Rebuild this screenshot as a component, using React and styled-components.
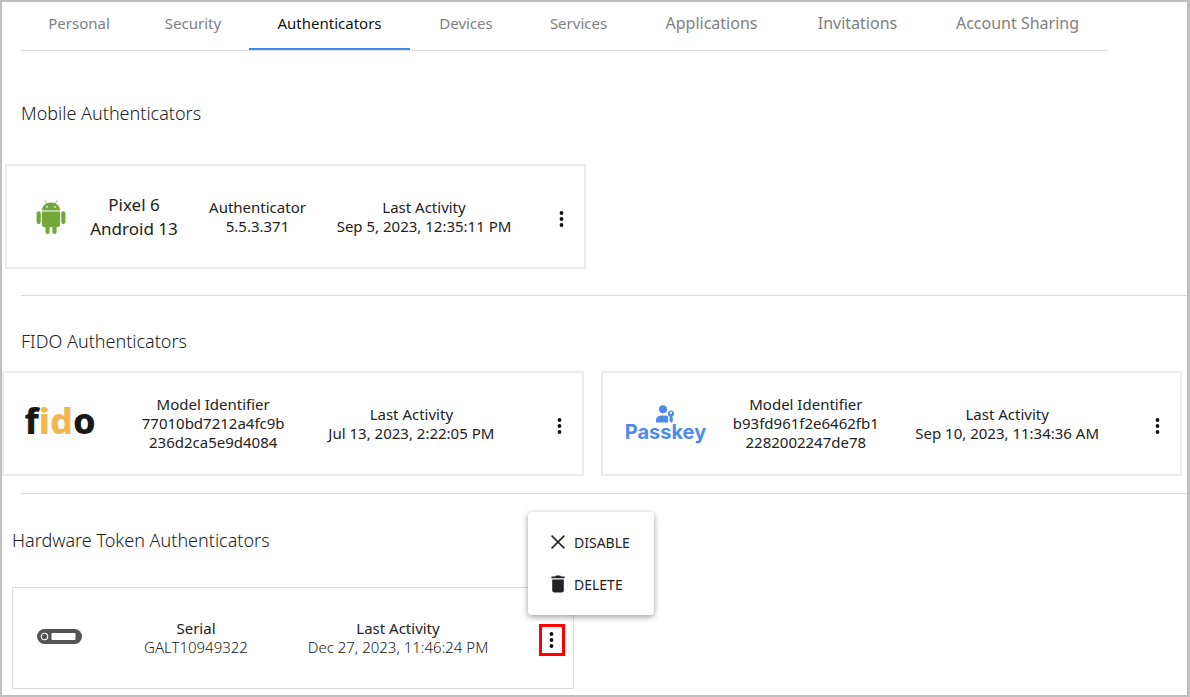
import { useState } from "react";
import styled, { createGlobalStyle } from "styled-components";

const tabs = [
    { name: "Personal", size: 15 },
    { name: "Security", size: 15 },
    { name: "Authenticators", size: 15 },
    { name: "Devices", size: 15 },
    { name: "Services", size: 15 },
    { name: "Applications", size: 16 },
    { name: "Invitations", size: 16 },
    { name: "Account Sharing", size: 16 },
];

export default function App() {

    const [tab, setTab] = useState("Authenticators");
    const [menuOpen, setMenuOpen] = useState(true);

    return (
        <>
            <GlobalStyle />
            <Page>
                <Tabs role="tablist">
                    {tabs.map(({ name, size }) => (
                        <Tab
                            key={name}
                            type="button"
                            role="tab"
                            aria-selected={name === tab}
                            $active={name === tab}
                            $size={size}
                            onClick={() => setTab(name)}
                        >
                            {name}
                        </Tab>
                    ))}
                </Tabs>

                <Section $top={50} $gap={39} $bottom={26}>
                    <Heading>Mobile Authenticators</Heading>
                    <Cards $left={3} $right={3}>
                        <Card $columns="60fr 106fr 141fr 192fr 55fr">
                            <AndroidIcon />
                            <Info $large>
                                <span>Pixel 6</span>
                                <span>Android 13</span>
                            </Info>
                            <Info>
                                <span>Authenticator</span>
                                <span>5.5.3.371</span>
                            </Info>
                            <Info>
                                <span>Last Activity</span>
                                <span>Sep 5, 2023, 12:35:11 PM</span>
                            </Info>
                            <More />
                        </Card>
                    </Cards>
                </Section>

                <Divider />

                <Section $top={33} $gap={18} $bottom={17}>
                    <Heading>FIDO Authenticators</Heading>
                    <Cards $left={0} $right={5}>
                        <Card $columns="84fr 222fr 174fr 74fr">
                            <FidoLogo>f<b>id</b>o</FidoLogo>
                            <Info>
                                <span>Model Identifier</span>
                                <span>77010bd7212a4fc9b</span>
                                <span>236d2ca5e9d4084</span>
                            </Info>
                            <Info>
                                <span>Last Activity</span>
                                <span>Jul 13, 2023, 2:22:05 PM</span>
                            </Info>
                            <More />
                        </Card>
                        <Card $columns="98fr 183fr 220fr 54fr">
                            <PasskeyLogo>
                                <PasskeyIcon />
                                <span>Passkey</span>
                            </PasskeyLogo>
                            <Info>
                                <span>Model Identifier</span>
                                <span>b93fd961f2e6462fb1</span>
                                <span>2282002247de78</span>
                            </Info>
                            <Info>
                                <span>Last Activity</span>
                                <span>Sep 10, 2023, 11:34:36 AM</span>
                            </Info>
                            <More />
                        </Card>
                    </Cards>
                </Section>

                <Divider />

                <Section $top={34} $gap={35} $bottom={6}>
                    <Heading $left={10}>Hardware Token Authenticators</Heading>
                    <Cards $left={10} $right={34}>
                        <Card $thin $columns="74fr 198fr 206fr 64fr">
                            <TokenIcon />
                            <Info $light>
                                <span>Serial</span>
                                <span>GALT10949322</span>
                            </Info>
                            <Info $light>
                                <span>Last Activity</span>
                                <span>Dec 27, 2023, 11:46:24 PM</span>
                            </Info>
                            <MenuAnchor>
                                <More marked onClick={() => setMenuOpen(!menuOpen)} />
                                {menuOpen &&
                                    <Menu role="menu">
                                        <MenuItem type="button" role="menuitem">
                                            <CloseIcon />
                                            DISABLE
                                        </MenuItem>
                                        <MenuItem type="button" role="menuitem">
                                            <TrashIcon />
                                            DELETE
                                        </MenuItem>
                                    </Menu>
                                }
                            </MenuAnchor>
                        </Card>
                    </Cards>
                </Section>
            </Page>
        </>
    )
}

function More({ marked, onClick }) {
    return (
        <MoreButton type="button" aria-label="More options" $marked={marked} onClick={onClick}>
            <svg width="6" height="18" viewBox="0 0 6 18" fill="#111111">
                <circle cx="2.5" cy="3" r="1.9" />
                <circle cx="2.5" cy="9" r="1.9" />
                <circle cx="2.5" cy="15" r="1.9" />
            </svg>
        </MoreButton>
    )
}

function AndroidIcon() {
    return (
        <svg width="30" height="37" viewBox="0 -2 30 37" fill="#73a839">
            <path d="M9 0.6 L11.2 4.2 M21 0.6 L18.8 4.2" stroke="#73a839" strokeWidth="0.7" strokeLinecap="round" />
            <path d="M6 10.4 C6 5.8 10 2.6 15 2.6 C20 2.6 24 5.8 24 10.4 Z" />
            <circle cx="11" cy="6.8" r="0.9" fill="#ffffff" />
            <circle cx="19" cy="6.8" r="0.9" fill="#ffffff" />
            <path d="M6 11.4 H24 V25 A2 2 0 0 1 22 27 H8 A2 2 0 0 1 6 25 Z" />
            <rect x="0.6" y="11.2" width="4.2" height="13" rx="2.1" />
            <rect x="25.2" y="11.2" width="4.2" height="13" rx="2.1" />
            <rect x="9.4" y="22" width="4.2" height="12" rx="2" />
            <rect x="16.4" y="22" width="4.2" height="12" rx="2" />
        </svg>
    )
}

function PasskeyIcon() {
    return (
        <svg width="20" height="18" viewBox="0 0 20 18" fill="#4c8bea">
            <circle cx="8" cy="4.2" r="4" />
            <path d="M1 17.4 V15.4 C1 12 3.6 10.4 7 10.4 H9 C11 10.4 12.4 10.9 13.2 11.8 V17.4 Z" />
            <path fillRule="evenodd" d="M16 5.4 A3.3 3.3 0 0 1 17.3 11.7 V12.8 L18.3 13.8 L17.3 14.8 L18.3 15.8 L16.3 17.8 L14.7 16.4 V11.7 A3.3 3.3 0 0 1 16 5.4 Z M16 6.8 A1.1 1.1 0 1 0 16 9 A1.1 1.1 0 1 0 16 6.8 Z" />
        </svg>
    )
}

function TokenIcon() {
    return (
        <svg width="46" height="18" viewBox="0 0 46 18">
            <rect width="45" height="15" rx="7.5" fill="#555555" />
            <circle cx="7.5" cy="7.5" r="3.2" fill="none" stroke="#ffffff" strokeWidth="1.1" />
            <rect x="14.5" y="4" width="24" height="7" rx="1" fill="#ffffff" />
        </svg>
    )
}

function CloseIcon() {
    return (
        <svg width="16" height="18" viewBox="0 0 16 18" stroke="#222222" strokeWidth="1.5">
            <path d="M1.6 2.6 L14.4 15.4 M14.4 2.6 L1.6 15.4" />
        </svg>
    )
}

function TrashIcon() {
    return (
        <svg width="16" height="18" viewBox="0 0 16 18" fill="#222222">
            <path d="M1.4 1.6 H5 L6 0.6 H10 L11 1.6 H14.6 V3.2 H1.4 Z" />
            <path d="M2.2 4.4 H13.8 V15.6 A1.8 1.8 0 0 1 12 17.4 H4 A1.8 1.8 0 0 1 2.2 15.6 Z" />
        </svg>
    )
}

const GlobalStyle = createGlobalStyle`
    * {
        box-sizing: border-box;
    }

    body {
        margin: 0;
        background: #ffffff;
        font-family: "Noto Sans", "Open Sans", sans-serif;
        color: #222222;
    }

    button {
        font-family: inherit;
        border: none;
        background: none;
        padding: 0;
        cursor: pointer;
    }

    svg {
        display: block;
        flex-shrink: 0;
    }
`

const Page = styled.main`
    min-height: 100vh;
    border: 2px solid #bfbfbf;
    border-right-width: 3px;
`

const Tabs = styled.div`
    display: grid;
    grid-template-columns: 116fr 112fr 161fr 112fr 113fr 153fr 139fr 181fr;
    margin: 0 79px 0 19px;
    border-bottom: 1px solid #dedede;
`

const Tab = styled.button`
    height: 48px;
    padding-bottom: 4px;
    border-bottom: 2px solid ${({ $active }) => $active ? "#4489f3" : "transparent"};
    font-size: ${({ $size }) => $size}px;
    font-weight: 400;
    white-space: nowrap;
    color: ${({ $active }) => $active ? "#111111" : "#808080"};
`

const Section = styled.section`
    display: flex;
    flex-direction: column;
    gap: ${({ $gap }) => $gap}px;
    padding-top: ${({ $top }) => $top}px;
    padding-bottom: ${({ $bottom }) => $bottom}px;
`

const Heading = styled.h2`
    margin: 0;
    padding-left: ${({ $left = 19 }) => $left}px;
    font-size: 18px;
    font-weight: 300;
    line-height: 24px;
`

const Divider = styled.hr`
    height: 1px;
    margin: 0 0 0 19px;
    border: none;
    background: #c8dcf2;
`

const Cards = styled.div`
    display: grid;
    grid-template-columns: 1fr 1fr;
    gap: 17px;
    padding: 0 ${({ $right }) => $right}px 0 ${({ $left }) => $left}px;
`

const Card = styled.article`
    display: grid;
    grid-template-columns: ${({ $columns }) => $columns};
    align-items: center;
    justify-items: center;
    min-height: ${({ $thin }) => $thin ? 102 : 105}px;
    padding: ${({ $thin }) => $thin ? "0 8px 0 10px" : "0 9px 0 14px"};
    border: ${({ $thin }) => $thin ? "1px solid #dddddd" : "2px solid #ebebeb"};

    > :last-child {
        justify-self: end;
    }
`

const Info = styled.div`
    display: flex;
    flex-direction: column;
    align-items: center;
    font-size: ${({ $large }) => $large ? 17 : 15}px;
    line-height: ${({ $large }) => $large ? 24 : 19}px;
    white-space: nowrap;

    span + span {
        font-weight: ${({ $light }) => $light ? 300 : 400};
    }
`

const FidoLogo = styled.div`
    padding-bottom: 6px;
    font-size: 36px;
    font-weight: 800;
    font-variant-ligatures: none;
    line-height: 40px;
    color: #1a1718;

    b {
        font-weight: inherit;
        color: #f2b84f;
    }
`

const PasskeyLogo = styled.div`
    display: flex;
    flex-direction: column;
    align-items: center;
    padding-bottom: 2px;
    font-family: Inter, sans-serif;
    font-size: 20px;
    font-weight: 700;
    line-height: 18px;
    color: #4c8bea;
`

const MoreButton = styled.button`
    display: flex;
    align-items: center;
    justify-content: center;
    width: 26px;
    height: 32px;
    margin-top: 4px;
    border: ${({ $marked }) => $marked ? "3px solid #ff0000" : "none"};
`

const MenuAnchor = styled.div`
    position: relative;
`

const Menu = styled.div`
    position: absolute;
    right: -89px;
    bottom: calc(100% + 5px);
    width: 126px;
    padding: 9px 0 10px;
    border-radius: 4px;
    background: #ffffff;
    box-shadow: 0 2px 6px rgba(0, 0, 0, 0.4);
`

const MenuItem = styled.button`
    display: flex;
    align-items: center;
    gap: 8px;
    width: 100%;
    height: 42px;
    padding-left: 22px;
    font-size: 14px;
    color: #222222;
`
